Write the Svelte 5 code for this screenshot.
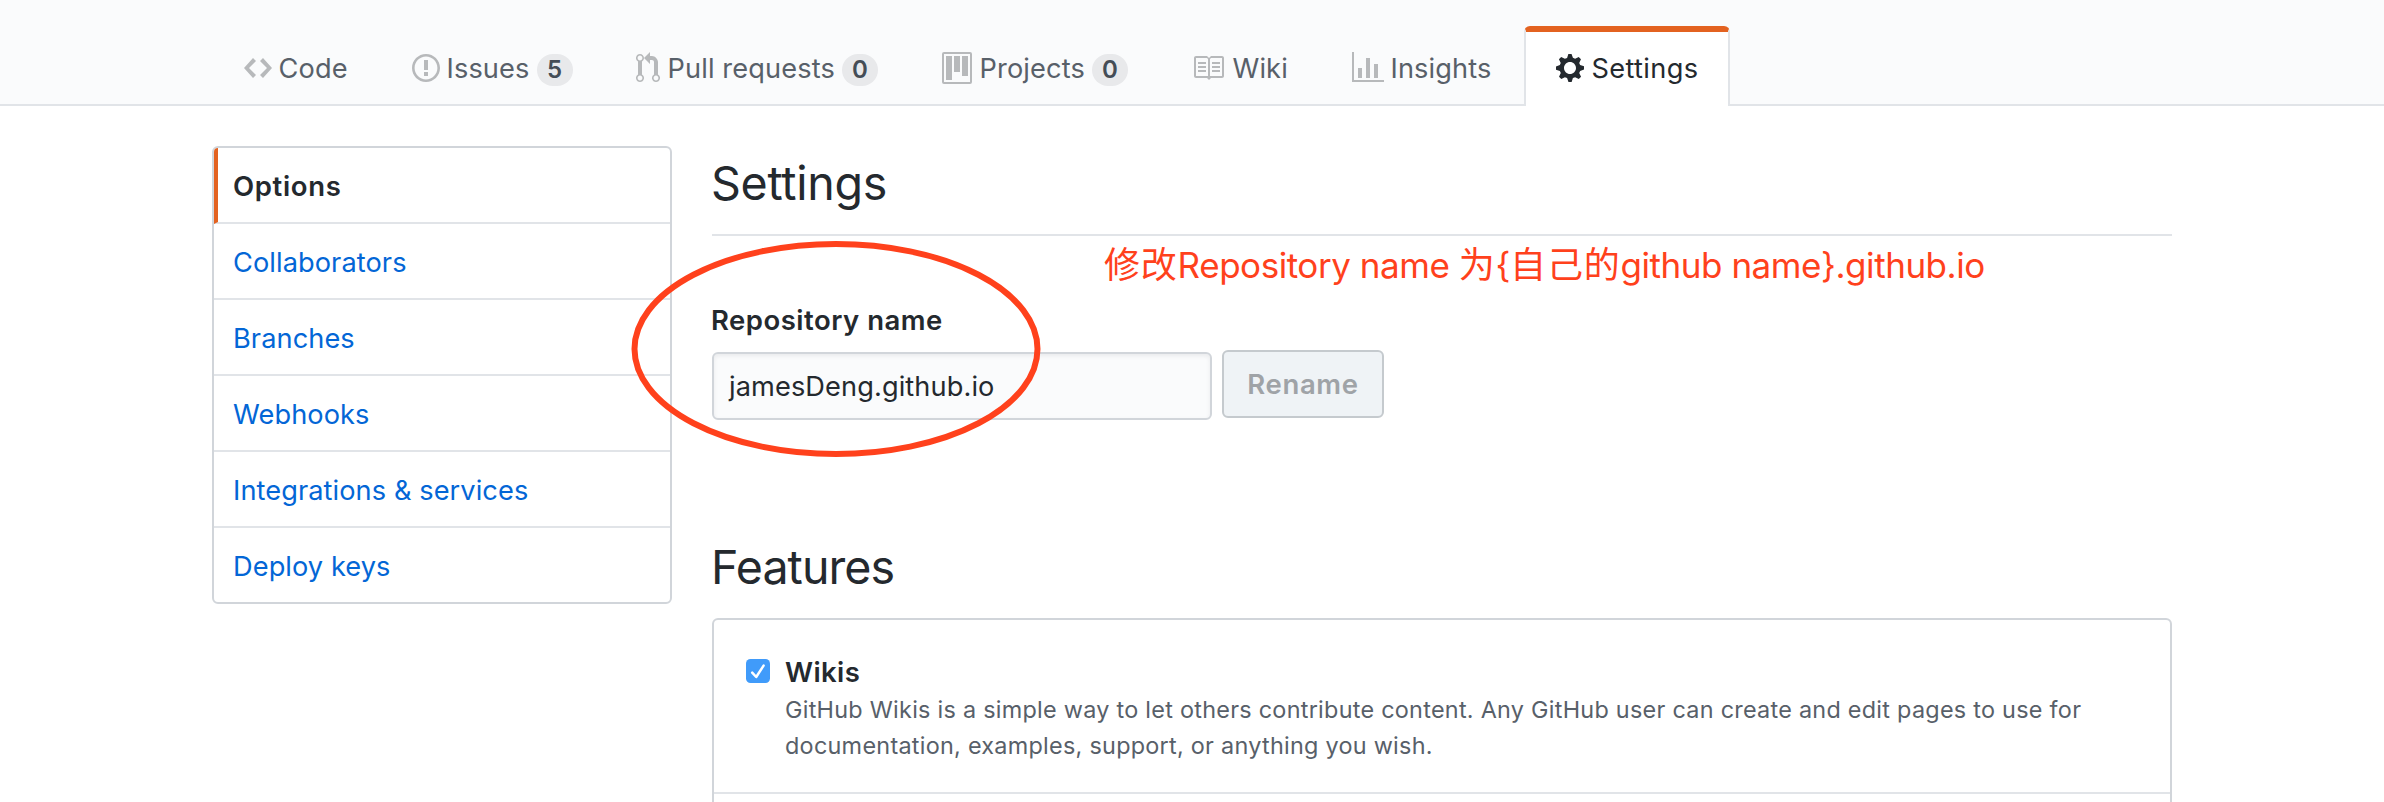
<script>
  const icons = {
    code: { w: 14, d: 'M9.5 3L8 4.5 11.5 8 8 11.5 9.5 13 14 8 9.5 3zm-5 0L0 8l4.5 5L6 11.5 2.5 8 6 4.5 4.5 3z' },
    issue: { w: 14, d: 'M7 2.3c3.14 0 5.7 2.56 5.7 5.7s-2.56 5.7-5.7 5.7A5.71 5.71 0 0 1 1.3 8c0-3.14 2.56-5.7 5.7-5.7zM7 1C3.14 1 0 4.14 0 8s3.14 7 7 7 7-3.14 7-7-3.14-7-7-7zm1 3H6v5h2V4zm0 6H6v2h2v-2z' },
    pull: { w: 12, d: 'M11 11.28V5c-.03-.78-.34-1.47-.94-2.06C9.46 2.35 8.78 2.03 8 2H7V0L4 3l3 3V4h1c.27.02.48.11.69.31.21.2.3.42.31.69v6.28A1.993 1.993 0 0 0 10 15a1.993 1.993 0 0 0 1-3.72zm-1 2.92c-.66 0-1.2-.55-1.2-1.2 0-.65.55-1.2 1.2-1.2.65 0 1.2.55 1.2 1.2 0 .65-.55 1.2-1.2 1.2zM4 3c0-1.11-.89-2-2-2a1.993 1.993 0 0 0-1 3.72v6.56A1.993 1.993 0 0 0 2 15a1.993 1.993 0 0 0 1-3.72V4.72c.59-.34 1-.98 1-1.72zm-.8 10c0 .66-.55 1.2-1.2 1.2-.65 0-1.2-.55-1.2-1.2 0-.65.55-1.2 1.2-1.2.65 0 1.2.55 1.2 1.2zM2 4.2C1.34 4.2.8 3.65.8 3c0-.65.55-1.2 1.2-1.2.65 0 1.2.55 1.2 1.2 0 .65-.55 1.2-1.2 1.2z' },
    project: { w: 15, d: 'M10 12h3V2h-3v10zm-4-2h3V2H6v8zm-4 4h3V2H2v12zm-1 1h13V1H1v14zM14 0H1a1 1 0 0 0-1 1v14a1 1 0 0 0 1 1h13a1 1 0 0 0 1-1V1a1 1 0 0 0-1-1z' },
    book: { w: 16, d: 'M3 5h4v1H3V5zm0 3h4V7H3v1zm0 2h4V9H3v1zm11-5h-4v1h4V5zm0 2h-4v1h4V7zm0 2h-4v1h4V9zm2-6v9c0 .55-.45 1-1 1H9.5l-1 1-1-1H2c-.55 0-1-.45-1-1V3c0-.55.45-1 1-1h5.5l1 1 1-1H15c.55 0 1 .45 1 1zm-8 .5L7.5 3H2v9h6V3.5zm7-.5H9.5l-.5.5V12h6V3z' },
    graph: { w: 16, d: 'M16 14v1H0V0h1v14h15zM5 13H3V8h2v5zm4 0H7V3h2v10zm4 0h-2V6h2v7z' },
    gear: { w: 14, d: 'M14 8.77v-1.6l-1.94-.64-.45-1.09.88-1.84-1.13-1.13-1.81.91-1.09-.45-.69-1.92h-1.6l-.63 1.94-1.11.45-1.84-.88-1.13 1.13.91 1.81-.45 1.09L0 7.23v1.59l1.94.64.45 1.09-.88 1.84 1.13 1.13 1.81-.91 1.09.45.69 1.92h1.59l.63-1.94 1.11-.45 1.84.88 1.13-1.13-.92-1.81.47-1.09L14 8.75v.02zM7 11c-1.66 0-3-1.34-3-3s1.34-3 3-3 3 1.34 3 3-1.34 3-3 3z' }
  };
  const tabs = [
    { label: 'Code', icon: 'code', width: 168 },
    { label: 'Issues', icon: 'issue', width: 224, count: 5 },
    { label: 'Pull requests', icon: 'pull', width: 306, count: 0 },
    { label: 'Projects', icon: 'project', width: 250, count: 0 },
    { label: 'Wiki', icon: 'book', width: 160 },
    { label: 'Insights', icon: 'graph', width: 204 },
    { label: 'Settings', icon: 'gear', width: 206, active: true }
  ];
  const menu = ['Options', 'Collaborators', 'Branches', 'Webhooks', 'Integrations & services', 'Deploy keys'];
</script>

<div class="page">
  <header>
    <nav class="tabs">
      {#each tabs as tab}
        <a class="tab {tab.icon}" class:active={tab.active} style:width="{tab.width}px">
          <svg width={icons[tab.icon].w * 2} height="32" viewBox="0 0 {icons[tab.icon].w} 16"><path fill-rule="evenodd" d={icons[tab.icon].d} /></svg>
          <span class="label">{tab.label}</span>
          {#if tab.count !== undefined}<span class="counter">{tab.count}</span>{/if}
        </a>
      {/each}
    </nav>
  </header>

  <div class="container">
    <aside>
      <nav class="menu">
        {#each menu as item, i}
          <a class:selected={i === 0}>{item}</a>
        {/each}
      </nav>
    </aside>

    <main>
      <h2 class="first">Settings</h2>
      <form>
        <div class="field">
          <span class="name-label">Repository name</span>
          <div class="input">jamesDeng.github.io</div>
        </div>
        <button type="button" disabled>Rename</button>
      </form>
      <h2 class="second">Features</h2>
      <section class="box">
        <div class="row">
          <svg class="check" width="24" height="24" viewBox="0 0 24 24">
            <rect width="24" height="24" rx="4.5" fill="#409bfa" />
            <path d="M6.2 13.6l4 4.4L17.6 6.6" fill="none" stroke="#fff" stroke-width="2.5" stroke-linecap="round" stroke-linejoin="round" />
          </svg>
          <div class="text">
            <strong>Wikis</strong>
            <p>GitHub Wikis is a simple way to let others contribute content. Any GitHub user can create and edit pages to use for<br />documentation, examples, support, or anything you wish.</p>
          </div>
        </div>
      </section>
    </main>
  </div>

  <svg class="ring" width="410" height="216" viewBox="0 0 410 216"><ellipse cx="205" cy="108" rx="201.5" ry="105" /></svg>
  <div class="note"><span class="han">修改</span>Repository name <span class="han">为</span>&#123;<span class="han">自己的</span>github name&#125;.github.io</div>
</div>

<style>
  :global(body) { margin: 0; background: #fff; }
  .page { position: relative; width: 2384px; height: 802px; overflow: hidden; background: #fff; color: #24292e; font: 27.2px/42px Inter, "Noto Sans CJK SC", sans-serif; }
  .page * { box-sizing: border-box; }
  header { height: 106px; padding-top: 26px; background: #fafbfc; border-bottom: 2px solid #e1e4e8; }
  .tabs { display: flex; padding-left: 212px; }
  .tab { display: flex; height: 80px; padding: 20px 0 0 30px; border: 2px solid transparent; border-top-width: 6px; border-bottom: 0; color: #586069; white-space: nowrap; border-radius: 6px 6px 0 0; }
  .tab svg { fill: #b7b9bb; flex: none; margin-right: 6.5px; }
  .tab.pull svg, .tab.project svg { margin-right: 7.5px; }
  .tab.book svg { margin-right: 8.5px; }
  .label { line-height: 34px; letter-spacing: .12px; }
  .tab.active { background: #fff; border-color: #e36220 #e1e4e8 transparent; color: #24292e; }
  .tab.active svg { fill: #24292e; margin-right: 7.5px; }
  .tab.active .label { letter-spacing: .35px; }
  .counter { width: 36px; height: 32px; margin: 2px 0 0 7px; border-radius: 20px; background: #e8e9eb; color: #444d56; font-size: 24px; font-weight: 600; line-height: 31px; text-align: center; }
  .container { display: flex; gap: 40px; padding: 40px 212px 0; }
  aside { width: 460px; flex: none; }
  .menu { height: 458px; border: 2px solid #d1d5da; border-radius: 6px; overflow: hidden; }
  .menu a { display: block; height: 76px; padding-left: 19px; border-bottom: 2px solid #e1e4e8; color: #0366d6; line-height: 77px; letter-spacing: .08px; }
  .menu a:last-child { border-bottom: 0; }
  .menu a.selected { padding-left: 15px; border-left: 4px solid #e36220; color: #24292e; font-size: 27.5px; font-weight: 600; line-height: 76px; letter-spacing: .65px; }
  main { flex: none; width: 1460px; }
  h2 { margin: 0; font-size: 46.6px; font-weight: 400; line-height: 72px; text-indent: -1px; }
  .first { height: 90px; border-bottom: 2px solid #e1e4e8; line-height: 74px; letter-spacing: -.3px; }
  form { display: flex; gap: 10px; height: 295px; padding-top: 62px; }
  .field { display: flex; flex-direction: column; width: 500px; }
  .name-label { font-size: 27.5px; font-weight: 600; line-height: 44px; letter-spacing: .5px; text-indent: -1px; }
  .input { height: 68px; margin-top: 10px; padding-left: 15px; border: 2px solid #d1d5da; border-radius: 6px; background: #fafbfc; box-shadow: inset 0 2px 4px rgba(27, 31, 35, .075); line-height: 65px; letter-spacing: .1px; }
  button { width: 162px; height: 68px; margin-top: 52px; padding: 0; border: 2px solid #c5cace; border-radius: 6px; background: #eff3f6; color: #9fa3a7; font: 600 27.5px/62px Inter, sans-serif; letter-spacing: .65px; text-align: center; }
  .second { height: 87px; letter-spacing: -.95px; }
  .box { height: 300px; border: 2px solid #d1d5da; border-radius: 6px; }
  .row { display: flex; height: 174px; padding: 30px 0 0 32px; border-bottom: 2px solid #e1e4e8; }
  .check { margin-top: 9px; flex: none; }
  .text { margin-left: 15px; }
  strong { display: block; height: 42px; font-size: 27.5px; font-weight: 600; line-height: 44px; letter-spacing: .4px; }
  p { margin: 0; color: #586069; font-size: 23.4px; line-height: 36px; letter-spacing: .27px; white-space: nowrap; }
  .ring { position: absolute; left: 631px; top: 241px; fill: none; stroke: #ff411c; stroke-width: 6; }
  .note { position: absolute; left: 1104px; top: 240px; color: #ff411c; font-size: 35px; line-height: 50px; letter-spacing: -.45px; white-space: nowrap; }
  .han { font-size: 36px; letter-spacing: .8px; }
</style>
